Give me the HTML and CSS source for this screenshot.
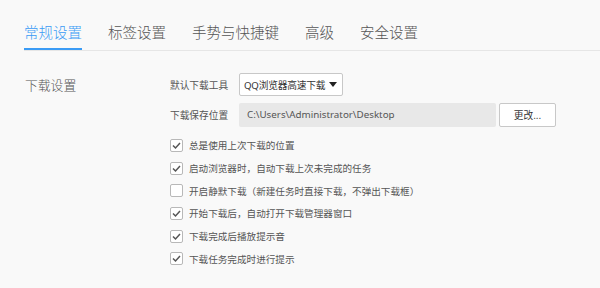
FILE: index.html
```html
<!DOCTYPE html>
<html lang="zh-CN">
<head>
    <meta charset="UTF-8">
    <title>设置</title>
    <link rel="stylesheet" href="styles.css">
</head>
<body>
    <div class="tabs">
        <div class="tab active">常规设置</div>
        <div class="tab">标签设置</div>
        <div class="tab">手势与快捷键</div>
        <div class="tab">高级</div>
        <div class="tab">安全设置</div>
    </div>

    <div class="section">
        <div class="section-title">下载设置</div>
        <div class="section-body">
            <div class="field">
                <span class="field-label">默认下载工具</span>
                <div class="select">
                    <span>QQ浏览器高速下载</span>
                    <svg class="arrow" width="8" height="5" viewBox="0 0 8 5"><path d="M0 0H8L4 5Z" fill="#222"/></svg>
                </div>
            </div>
            <div class="field">
                <span class="field-label">下载保存位置</span>
                <div class="path">C:\Users\Administrator\Desktop</div>
                <button class="btn">更改...</button>
            </div>

            <div class="checks">
                <label class="check"><span class="box on"><svg width="11" height="11" viewBox="0 0 11 11"><path d="M2 5.5L4.5 8L9 3" fill="none" stroke="#555" stroke-width="1.5"/></svg></span>总是使用上次下载的位置</label>
                <label class="check"><span class="box on"><svg width="11" height="11" viewBox="0 0 11 11"><path d="M2 5.5L4.5 8L9 3" fill="none" stroke="#555" stroke-width="1.5"/></svg></span>启动浏览器时，自动下载上次未完成的任务</label>
                <label class="check"><span class="box"></span>开启静默下载（新建任务时直接下载，不弹出下载框）</label>
                <label class="check"><span class="box on"><svg width="11" height="11" viewBox="0 0 11 11"><path d="M2 5.5L4.5 8L9 3" fill="none" stroke="#555" stroke-width="1.5"/></svg></span>开始下载后，自动打开下载管理器窗口</label>
                <label class="check"><span class="box on"><svg width="11" height="11" viewBox="0 0 11 11"><path d="M2 5.5L4.5 8L9 3" fill="none" stroke="#555" stroke-width="1.5"/></svg></span>下载完成后播放提示音</label>
                <label class="check"><span class="box on"><svg width="11" height="11" viewBox="0 0 11 11"><path d="M2 5.5L4.5 8L9 3" fill="none" stroke="#555" stroke-width="1.5"/></svg></span>下载任务完成时进行提示</label>
            </div>
        </div>
    </div>
</body>
</html>
```

FILE: styles.css
```css
body {
    margin: 0;
    background-color: #f9f9f9;
    font-family: "Noto Sans", "Noto Sans CJK SC", sans-serif;
    color: #555;
}
.tabs {
    display: flex;
    gap: 26px;
    margin-left: 24px;
    padding-top: 22px;
    border-bottom: 1px solid #e6e6e6;
}
.tab {
    font-family: "Noto Sans CJK SC", sans-serif;
    font-size: 14.5px;
    font-weight: 300;
    line-height: 20px;
    padding-bottom: 6px;
    border-bottom: 2px solid transparent;
    color: #555;
}
.tab.active {
    color: #3a9bf5;
    border-bottom-color: #3a9bf5;
}
.section {
    display: flex;
    padding: 22px 0 0 25px;
}
.section-title {
    width: 145px;
    font-family: "Noto Sans CJK SC", sans-serif;
    font-size: 12.8px;
    font-weight: 300;
    line-height: 23px;
}
.field {
    display: flex;
    align-items: center;
    margin-bottom: 7px;
    font-size: 9.7px;
}
.field-label {
    width: 69px;
    font-family: "Noto Sans CJK SC", sans-serif;
}
.select {
    display: flex;
    align-items: center;
    justify-content: space-between;
    box-sizing: border-box;
    width: 104px;
    height: 23px;
    padding: 0 5px 0 4px;
    background: #fff;
    border: 1px solid #c8c8c8;
    border-radius: 2px;
    color: #333;
    white-space: nowrap;
    letter-spacing: -0.2px;
}
.path {
    box-sizing: border-box;
    width: 257px;
    height: 24px;
    line-height: 24px;
    padding-left: 8px;
    background: #e8e8e8;
    border-radius: 2px;
    font-size: 9.8px;
}
.btn {
    box-sizing: border-box;
    width: 57px;
    height: 24px;
    margin-left: 3px;
    padding: 0;
    background: #fff;
    border: 1px solid #c8c8c8;
    border-radius: 2px;
    font-family: "Noto Sans CJK SC", sans-serif;
    font-size: 9.7px;
    color: #333;
}
.check {
    display: flex;
    align-items: center;
    height: 22.7px;
    font-family: "Noto Sans CJK SC", sans-serif;
    font-size: 9.6px;
}
.box {
    display: flex;
    align-items: center;
    justify-content: center;
    box-sizing: border-box;
    width: 13px;
    height: 13px;
    margin-right: 6px;
    background: #fff;
    border: 1px solid #b8b8b8;
    border-radius: 2px;
}
```
